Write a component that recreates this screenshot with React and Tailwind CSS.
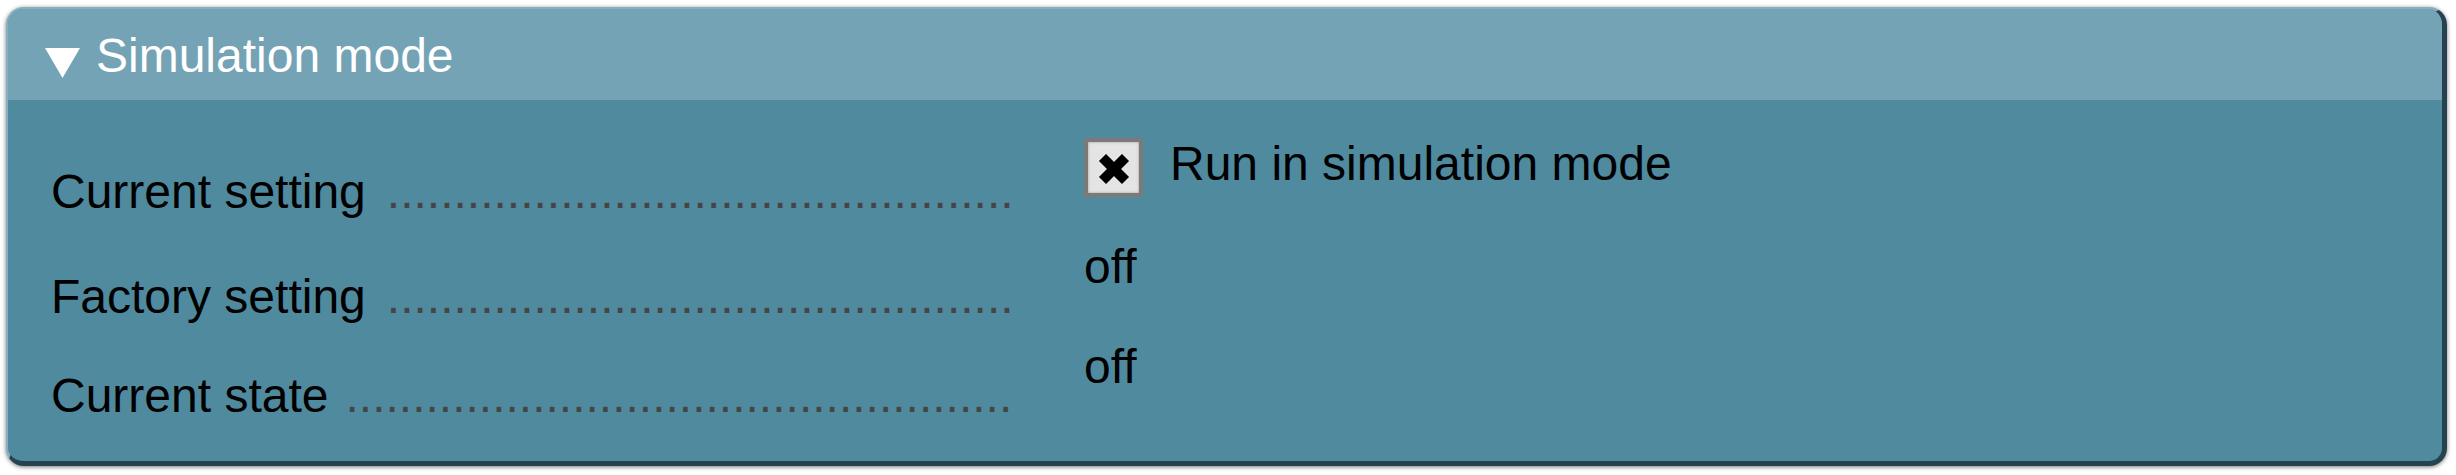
import React from "react";

function LeaderLabel({ text, pt, dots, gap }) {
  return (
    <div className={`flex w-[960px] shrink-0 ${pt}`}>
      <span className="shrink-0 whitespace-nowrap text-black">{text}</span>
      <span className={`${gap} shrink-0 whitespace-nowrap text-[#454545]`}>
        {".".repeat(dots)}
      </span>
    </div>
  );
}

export default function App() {
  return (
    <div
      className="w-[2456px] h-[475px] pt-[7px] pl-[6px] pr-[9px] pb-[9px] bg-white"
      style={{ fontFamily: '"Liberation Sans", Arial, sans-serif' }}
    >
      <div className="h-full overflow-hidden rounded-[18px] border-t-2 border-l-2 border-r-[5px] border-b-[5px] border-t-[#86afbf] border-l-[#86afbf] border-r-[#24434f] border-b-[#24434f] bg-[#4f8a9f] shadow-[0_1px_4px_rgba(0,0,0,0.55)] text-[48px] leading-[55px]">
        {/* header */}
        <div className="flex h-[91px] items-start bg-[#74a3b5] pl-[37px] pt-[19px]">
          <svg width="35" height="30" viewBox="0 0 35 30" className="mt-[20px] shrink-0">
            <polygon points="0,0 35,0 17.5,30" fill="#ffffff" />
          </svg>
          <span className="ml-[16px] text-white whitespace-nowrap">Simulation mode</span>
        </div>
        {/* body */}
        <div className="flex flex-col pl-[43px] pt-[36px]">
          <div className="flex h-[103px]">
            <LeaderLabel text="Current setting" pt="pt-[28px]" dots={47} gap="ml-[21px]" />
            <div className="ml-[73px] flex items-start">
              <div className="mt-[2px] flex h-[59px] w-[59px] shrink-0 items-center justify-center border-4 border-[#7a7a7a] bg-[#e4e4e4] shadow-[inset_0_0_3px_rgba(0,0,0,0.3)]">
                <svg width="34" height="34" viewBox="0 0 34 34" className="mt-[3px]">
                  <line x1="5.5" y1="5.5" x2="28.5" y2="28.5" stroke="#000" strokeWidth="10" />
                  <line x1="28.5" y1="5.5" x2="5.5" y2="28.5" stroke="#000" strokeWidth="10" />
                </svg>
              </div>
              <span className="ml-[27px] whitespace-nowrap text-black">Run in simulation mode</span>
            </div>
          </div>
          <div className="flex h-[100px]">
            <LeaderLabel text="Factory setting" pt="pt-[30px]" dots={47} gap="ml-[21px]" />
            <div className="ml-[73px] text-black">off</div>
          </div>
          <div className="flex">
            <LeaderLabel text="Current state" pt="pt-[29px]" dots={50} gap="ml-[17px]" />
            <div className="ml-[73px] text-black">off</div>
          </div>
        </div>
      </div>
    </div>
  );
}
